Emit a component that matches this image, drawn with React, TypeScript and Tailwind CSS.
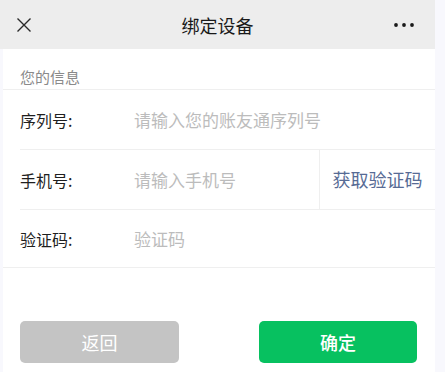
import React from "react";

const font = { fontFamily: '"Noto Sans CJK SC", "Noto Sans", sans-serif' };

export default function App() {
  return (
    <div
      className="w-[445px] h-[372px] bg-[#f8f8fd] overflow-hidden"
      style={font}
    >
      <div className="w-[435px] h-full flex flex-col">
        {/* Header */}
        <div className="h-[49px] bg-[#ededed] flex items-center justify-between shrink-0 relative">
          <div className="w-[48px] flex items-center justify-center">
            <svg width="16" height="16" viewBox="0 0 16 16">
              <path d="M1.5 1.5 L14.5 14.5 M14.5 1.5 L1.5 14.5" stroke="#2a2a2a" strokeWidth="1.4" fill="none" />
            </svg>
          </div>
          <div className="absolute left-0 right-0 text-center text-[18px] leading-[24px] text-[#191919] font-normal pointer-events-none">
            绑定设备
          </div>
          <div className="w-[60px] flex items-center justify-center pr-[2px]">
            <svg width="22" height="6" viewBox="0 0 22 6">
              <circle cx="3" cy="3" r="1.9" fill="#1a1a1a" />
              <circle cx="11" cy="3" r="1.9" fill="#1a1a1a" />
              <circle cx="19" cy="3" r="1.9" fill="#1a1a1a" />
            </svg>
          </div>
        </div>

        {/* Body */}
        <div className="ml-[3px] flex-1 bg-white flex flex-col">
          <div className="pt-[18px] pb-[2px] pl-[17px] text-[15px] leading-[20px] text-[#8a8a8a] border-b border-[#efefef]">
            您的信息
          </div>

          <div className="pl-[17px]">
            <div className="h-[60px] flex items-center border-b border-[#efefef]">
              <div className="w-[114px] text-[16px] text-[#1f1f1f]">序列号:</div>
              <div className="text-[17px] text-[#bcbcbc]">请输入您的账友通序列号</div>
            </div>
            <div className="h-[60px] flex items-stretch border-b border-[#efefef]">
              <div className="flex-1 flex items-center">
                <div className="w-[114px] text-[16px] text-[#1f1f1f]">手机号:</div>
                <div className="text-[17px] text-[#bcbcbc]">请输入手机号</div>
              </div>
              <div className="w-[116px] border-l border-[#efefef] flex items-center justify-center text-[18px] text-[#576b95]">
                获取验证码
              </div>
            </div>
          </div>
          <div className="h-[58px] flex items-center pl-[17px] border-b border-[#efefef]">
            <div className="w-[114px] text-[16px] text-[#1f1f1f]">验证码:</div>
            <div className="text-[17px] text-[#bcbcbc]">验证码</div>
          </div>

          <div className="pt-[53px] pl-[17px] pr-[18px] flex justify-between">
            <div className="w-[159px] h-[42px] rounded-[5px] bg-[#c4c4c4] flex items-center justify-center text-[18px] text-white">
              返回
            </div>
            <div className="w-[158px] h-[42px] rounded-[5px] bg-[#07c160] flex items-center justify-center text-[18px] font-medium text-white">
              确定
            </div>
          </div>
        </div>
      </div>
    </div>
  );
}
